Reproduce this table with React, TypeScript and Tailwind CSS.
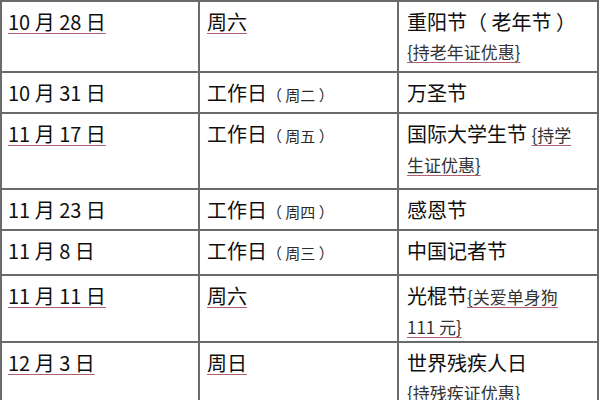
import React from "react";

const u = "underline decoration-[#b0606e] decoration-1 underline-offset-[3px]";
const cell = "border-r-2 border-b-2 border-[#6a6a6a] overflow-hidden";
const main = "text-[20px]";
const small = "text-[15px] text-[#2a2a2a]";
const note = "text-[17px] text-[#333]";

export default function App() {
  return (
    <div
      className="w-[600px] h-[400px] overflow-hidden bg-white text-[#0f0f0f]"
      style={{ fontFamily: '"Noto Sans CJK SC", "Noto Sans", sans-serif' }}
    >
      <div className="grid grid-cols-[198px_199px_200px] grid-rows-[71px_41px_76px_41px_45px_67px_70px] border-l-2 border-t-2 border-[#6a6a6a] w-[599px]">
        {/* Row 1 */}
        <div className={`${cell} pl-[6px] pt-[6px] leading-[28px] ${main}`}>
          <span className={u}>10 月 28 日</span>
        </div>
        <div className={`${cell} pl-[7px] pt-[6px] leading-[28px] ${main}`}>
          <span className={u}>周六</span>
        </div>
        <div className={`${cell} pl-[8px] pt-[5px] leading-[30px]`}>
          <div className={main}>重阳节（ 老年节 ）</div>
          <div className={note}>
            <span className={u}>{"{持老年证优惠}"}</span>
          </div>
        </div>

        {/* Row 2 */}
        <div className={`${cell} pl-[6px] pt-[6px] leading-[28px] ${main}`}>10 月 31 日</div>
        <div className={`${cell} pl-[7px] pt-[6px] leading-[28px] ${main}`}>
          工作日<span className={small}>（ 周二 ）</span>
        </div>
        <div className={`${cell} pl-[8px] pt-[5px] leading-[30px] ${main}`}>万圣节</div>

        {/* Row 3 */}
        <div className={`${cell} pl-[6px] pt-[6px] leading-[28px] ${main}`}>
          <span className={u}>11 月 17 日</span>
        </div>
        <div className={`${cell} pl-[7px] pt-[6px] leading-[28px] ${main}`}>
          工作日<span className={small}>（ 周五 ）</span>
        </div>
        <div className={`${cell} pl-[8px] pt-[5px] leading-[30px]`}>
          <div>
            <span className={main}>国际大学生节 </span>
            <span className={`${note} ${u}`}>{"{持学"}</span>
          </div>
          <div className={note}>
            <span className={u}>{"生证优惠}"}</span>
          </div>
        </div>

        {/* Row 4 */}
        <div className={`${cell} pl-[6px] pt-[6px] leading-[28px] ${main}`}>11 月 23 日</div>
        <div className={`${cell} pl-[7px] pt-[6px] leading-[28px] ${main}`}>
          工作日<span className={small}>（ 周四 ）</span>
        </div>
        <div className={`${cell} pl-[8px] pt-[5px] leading-[30px] ${main}`}>感恩节</div>

        {/* Row 5 */}
        <div className={`${cell} pl-[6px] pt-[6px] leading-[28px] ${main}`}>11 月 8 日</div>
        <div className={`${cell} pl-[7px] pt-[6px] leading-[28px] ${main}`}>
          工作日<span className={small}>（ 周三 ）</span>
        </div>
        <div className={`${cell} pl-[8px] pt-[5px] leading-[30px] ${main}`}>中国记者节</div>

        {/* Row 6 */}
        <div className={`${cell} pl-[6px] pt-[6px] leading-[28px] ${main}`}>
          <span className={u}>11 月 11 日</span>
        </div>
        <div className={`${cell} pl-[7px] pt-[6px] leading-[28px] ${main}`}>
          <span className={u}>周六</span>
        </div>
        <div className={`${cell} pl-[8px] pt-[5px] leading-[30px]`}>
          <div>
            <span className={main}>光棍节</span>
            <span className={`${note} ${u}`}>{"{关爱单身狗"}</span>
          </div>
          <div className={note}>
            <span className={u}>{"111 元}"}</span>
          </div>
        </div>

        {/* Row 7 */}
        <div className={`${cell} pl-[6px] pt-[6px] leading-[28px] ${main}`}>
          <span className={u}>12 月 3 日</span>
        </div>
        <div className={`${cell} pl-[7px] pt-[6px] leading-[28px] ${main}`}>
          <span className={u}>周日</span>
        </div>
        <div className={`${cell} pl-[8px] pt-[5px] leading-[30px]`}>
          <div className={main}>世界残疾人日</div>
          <div className={note}>
            <span className={u}>{"{持残疾证优惠}"}</span>
          </div>
        </div>
      </div>
    </div>
  );
}
